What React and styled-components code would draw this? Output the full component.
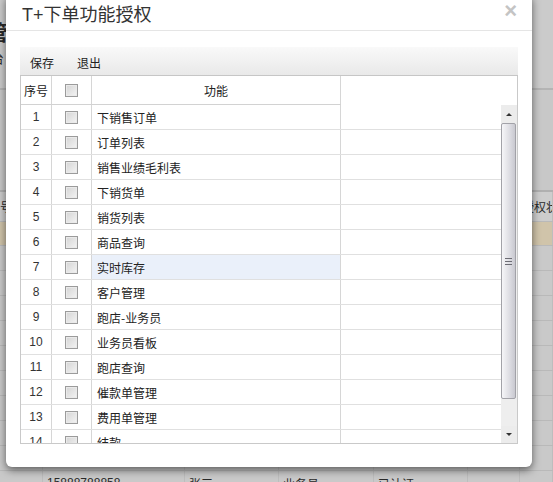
import React from "react";
import styled, { createGlobalStyle } from "styled-components";

const GlobalStyle = createGlobalStyle`
  html, body {
    margin: 0;
    padding: 0;
    background: #c9c9c9;
  }
  body {
    font-family: "Liberation Sans", "Noto Sans CJK SC", sans-serif;
    color: #333;
  }
`;

const Page = styled.div`
  position: relative;
  width: 553px;
  height: 482px;
  overflow: hidden;
  background: #c9c9c9;
`;

/* ---------- page behind the dialog (dimmed) ---------- */

const Backdrop = styled.div`
  display: flex;
  flex-direction: column;
  width: 100%;
  height: 100%;
  color: #2a2a2a;
`;

const BackHead = styled.div`
  height: 90px;
  box-sizing: border-box;
  display: flex;
  flex-direction: column;
  justify-content: center;
  gap: 4px;
  border-bottom: 2px solid #b4b4b4;
  background: #cbcbcb;
  flex: none;
`;

const BackTitle = styled.div`
  margin-left: -13px;
  font-size: 21px;
  font-weight: bold;
  line-height: 22px;
`;

const BackSub = styled.div`
  margin-left: -9px;
  font-size: 13px;
`;

const BackFilters = styled.div`
  height: 102px;
  box-sizing: border-box;
  border-bottom: 2px solid #b0b0b0;
  background: #c8c8c8;
  flex: none;
`;

const BackRow = styled.div`
  display: grid;
  grid-template-columns: 43px 142px 94px 95px 94px 52px 1fr;
  height: ${(p) => p.$h || 25}px;
  box-sizing: border-box;
  background: ${(p) => p.$bg || "transparent"};
  border-bottom: 1px solid #b9b9b9;
  font-size: 12px;
  flex: none;
`;

const BackCell = styled.div`
  display: flex;
  align-items: center;
  padding-left: ${(p) => (p.$shift ? `${p.$shift}px` : "4px")};
  border-right: 1px solid #bdbdbd;
  white-space: nowrap;
  overflow: hidden;
`;

/* ---------- dialog ---------- */

const Dialog = styled.div`
  position: absolute;
  left: 6px;
  top: -6px;
  width: 526px;
  height: 473px;
  background: #fff;
  border-radius: 6px;
  box-shadow: 0 3px 9px rgba(0, 0, 0, 0.55);
  display: flex;
  flex-direction: column;
  box-sizing: border-box;
`;

const DialogHeader = styled.div`
  height: 37px;
  box-sizing: border-box;
  padding: 6px 15px 0 16px;
  display: flex;
  align-items: center;
  justify-content: space-between;
  border-bottom: 1px solid #e5e5e5;
`;

const Title = styled.h3`
  margin: 0;
  font-size: 18px;
  font-weight: normal;
  color: #333;
  line-height: 24px;
`;

const Close = styled.span`
  font-size: 22px;
  font-weight: bold;
  line-height: 16px;
  color: #c4c4c4;
  margin-bottom: 8px;
`;

const DialogBody = styled.div`
  padding: 16px 14px 0;
  display: flex;
  flex-direction: column;
`;

const Toolbar = styled.div`
  height: 28px;
  display: flex;
  align-items: center;
  gap: 3px;
  background: linear-gradient(#f9f9f9, #e9e9e9);
  border-bottom: 1px solid #c6c6c6;
`;

const ToolButton = styled.span`
  padding: 2px 10px 0;
  font-size: 12px;
  color: #222;
  font-family: "Noto Sans CJK SC", sans-serif;
`;

const Grid = styled.div`
  border: 1px solid #c9c9c9;
  border-top: none;
  display: flex;
  flex-direction: column;
`;

const HeadLine = styled.div`
  height: 29px;
  display: flex;
`;

const RowGrid = styled.div`
  display: grid;
  grid-template-columns: 31px 40px 249px;
  height: ${(p) => p.$h}px;
  box-sizing: border-box;
  border-bottom: 1px solid ${(p) => (p.$head ? "#d2d2d2" : "#e0e0e0")};
  flex: none;
`;

const Cell = styled.div`
  display: flex;
  align-items: center;
  justify-content: ${(p) => (p.$left ? "flex-start" : "center")};
  padding-left: ${(p) => (p.$left ? "5px" : "0")};
  border-right: 1px solid #d6d6d6;
  font-size: 12px;
  color: #222;
  font-family: "Noto Sans CJK SC", "Liberation Sans", sans-serif;
  white-space: nowrap;
  background: ${(p) => (p.$active ? "#eaf0fa" : "transparent")};
`;

const NumCell = styled(Cell)`
  font-family: "Liberation Sans", sans-serif;
  color: #333;
`;

const Check = styled.span`
  width: 11px;
  height: 11px;
  border: 1px solid #9b9b9b;
  background: linear-gradient(135deg, #d4d4d4, #f4f4f4);
  box-shadow: inset 0 0 0 1px #eaeaea;
`;

const BodyArea = styled.div`
  height: 338px;
  display: flex;
`;

const Rows = styled.div`
  flex: 1;
  overflow: hidden;
  display: flex;
  flex-direction: column;
`;

const Scrollbar = styled.div`
  width: 16px;
  display: flex;
  flex-direction: column;
  background: #eeeeee;
  flex: none;
`;

const Arrow = styled.div`
  height: ${(p) => p.$h}px;
  display: flex;
  align-items: center;
  justify-content: center;
  background: #ececec;
  &::before {
    content: "";
    border-left: 3px solid transparent;
    border-right: 3px solid transparent;
    ${(p) =>
      p.$up
        ? "border-bottom: 3px solid #333;"
        : "border-top: 3px solid #333;"}
  }
`;

const Thumb = styled.div`
  height: 276px;
  box-sizing: border-box;
  margin: 0 1px 0 0;
  border: 1px solid #a2a2a8;
  border-radius: 2px;
  background: linear-gradient(90deg, #f6f6f8, #dcdce2 60%, #c9c9d0);
  display: flex;
  flex-direction: column;
  align-items: center;
  justify-content: center;
  gap: 2px;
`;

const Grip = styled.span`
  width: 7px;
  height: 1px;
  background: #6c6c74;
`;

const Track = styled.div`
  flex: 1;
`;

const items = [
  "下销售订单",
  "订单列表",
  "销售业绩毛利表",
  "下销货单",
  "销货列表",
  "商品查询",
  "实时库存",
  "客户管理",
  "跑店-业务员",
  "业务员看板",
  "跑店查询",
  "催款单管理",
  "费用单管理",
  "结款",
];

const emptyRows = 9;
const blanks = Array.from({ length: 7 }, (_, i) => i);

export default function App() {
  return (
    <>
      <GlobalStyle />
      <Page>
        <Backdrop>
          <BackHead>
            <BackTitle>管理</BackTitle>
            <BackSub>台</BackSub>
          </BackHead>
          <BackFilters />
          <BackRow $h={30} $bg="#cdcdcd">
            <BackCell $shift={-5}>号</BackCell>
            <BackCell />
            <BackCell />
            <BackCell />
            <BackCell />
            <BackCell />
            <BackCell $shift={2}>授权状态</BackCell>
          </BackRow>
          <BackRow $h={24} $bg="#d0c4aa">
            {blanks.map((b) => (
              <BackCell key={b} />
            ))}
          </BackRow>
          {Array.from({ length: emptyRows }, (_, i) => (
            <BackRow key={i}>
              {blanks.map((b) => (
                <BackCell key={b} />
              ))}
            </BackRow>
          ))}
          <BackRow>
            <BackCell />
            <BackCell>15888788858</BackCell>
            <BackCell>张三</BackCell>
            <BackCell>业务员</BackCell>
            <BackCell>已认证</BackCell>
            <BackCell />
            <BackCell />
          </BackRow>
        </Backdrop>

        <Dialog>
          <DialogHeader>
            <Title>T+下单功能授权</Title>
            <Close>×</Close>
          </DialogHeader>
          <DialogBody>
            <Toolbar>
              <ToolButton>保存</ToolButton>
              <ToolButton>退出</ToolButton>
            </Toolbar>
            <Grid>
              <HeadLine>
                <RowGrid $h={29} $head>
                  <Cell>序号</Cell>
                  <Cell>
                    <Check />
                  </Cell>
                  <Cell>功能</Cell>
                </RowGrid>
              </HeadLine>
              <BodyArea>
                <Rows>
                  {items.map((name, i) => (
                    <RowGrid key={name} $h={25}>
                      <NumCell>{i + 1}</NumCell>
                      <Cell>
                        <Check />
                      </Cell>
                      <Cell $left $active={i === 6}>
                        {name}
                      </Cell>
                    </RowGrid>
                  ))}
                </Rows>
                <Scrollbar>
                  <Arrow $h={18} $up />
                  <Thumb>
                    <Grip />
                    <Grip />
                    <Grip />
                  </Thumb>
                  <Track />
                  <Arrow $h={17} />
                </Scrollbar>
              </BodyArea>
            </Grid>
          </DialogBody>
        </Dialog>
      </Page>
    </>
  );
}
